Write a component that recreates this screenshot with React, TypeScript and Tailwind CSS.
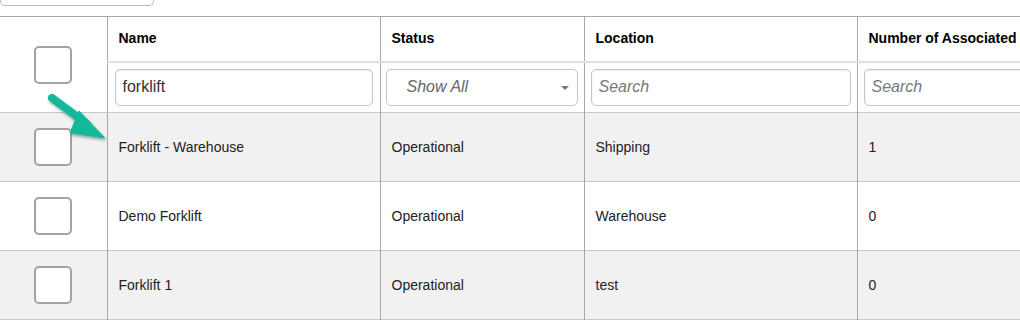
import React from "react";

const rows = [
  { name: "Forklift - Warehouse", status: "Operational", location: "Shipping", count: "1" },
  { name: "Demo Forklift", status: "Operational", location: "Warehouse", count: "0" },
  { name: "Forklift 1", status: "Operational", location: "test", count: "0" },
];

const Box = () => (
  <div className="mx-auto w-[38px] h-[38px] rounded-[5px] border-2 border-[#a3a3a3] bg-white" />
);

const inputCls =
  "w-full h-[37px] rounded-[5px] border border-[#c4c4c4] bg-white px-[7px] text-[16px] text-[#333] outline-none shadow-[inset_0_1px_2px_rgba(0,0,0,0.08)] placeholder:italic placeholder:text-[#777]";

export default function App() {
  return (
    <div className="relative w-[1020px] h-[325px] overflow-hidden bg-white font-['Liberation_Sans',Arial,sans-serif]">
      <div className="h-4">
        <div className="w-[154px] h-[6px] border border-t-0 border-[#bbb] rounded-b-[5px]" />
      </div>

      <table className="table-fixed border-collapse w-[1130px] text-[14px] text-[#222]">
        <colgroup>
          <col className="w-[107px]" />
          <col className="w-[273px]" />
          <col className="w-[204px]" />
          <col className="w-[273px]" />
          <col className="w-[273px]" />
        </colgroup>
        <thead>
          <tr className="h-[45px] border-t border-[#a8a8a8]">
            <th rowSpan={2} className="border-r border-b border-r-[#a8a8a8] border-b-[#c8c8c8] align-middle">
              <Box />
            </th>
            {["Name", "Status", "Location", "Number of Associated"].map((h) => (
              <th
                key={h}
                className="border-r border-b-2 border-r-[#a8a8a8] border-b-[#e0e0e0] pl-[11px] text-left font-bold text-black whitespace-nowrap"
              >
                {h}
              </th>
            ))}
          </tr>
          <tr className="h-[51px] border-b border-[#c8c8c8]">
            <td className="border-r border-[#a8a8a8] px-[7px]">
              <input className={inputCls} defaultValue="forklift" />
            </td>
            <td className="border-r border-[#a8a8a8] pl-[5px] pr-[6px]">
              <div className="relative flex items-center h-[37px] rounded-[5px] border border-[#c4c4c4] bg-white pl-[20px] text-[16px] italic text-[#666]">
                Show All
                <span className="absolute right-[8px] top-[16px] w-0 h-0 border-l-[4px] border-r-[4px] border-t-[4px] border-l-transparent border-r-transparent border-t-[#777]" />
              </div>
            </td>
            <td className="border-r border-[#a8a8a8] px-[6px]">
              <input className={inputCls} placeholder="Search" />
            </td>
            <td className="border-r border-[#a8a8a8] px-[6px]">
              <input className={inputCls} placeholder="Search" />
            </td>
          </tr>
        </thead>
        <tbody>
          {rows.map((r, i) => (
            <tr key={r.name} className={`h-[69px] border-b border-[#c8c8c8] ${i % 2 === 0 ? "bg-[#f1f1f1]" : "bg-white"}`}>
              <td className="border-r border-[#a8a8a8]">
                <Box />
              </td>
              <td className="border-r border-[#a8a8a8] pl-[11px]">{r.name}</td>
              <td className="border-r border-[#a8a8a8] pl-[11px]">{r.status}</td>
              <td className="border-r border-[#a8a8a8] pl-[11px]">{r.location}</td>
              <td className="border-r border-[#a8a8a8] pl-[11px]">{r.count}</td>
            </tr>
          ))}
        </tbody>
      </table>

      <svg className="absolute left-[44px] top-[90px]" width="70" height="56" viewBox="0 0 70 56">
        <defs>
          <filter id="sh" x="-20%" y="-20%" width="150%" height="150%">
            <feDropShadow dx="1" dy="2" stdDeviation="1.5" floodColor="#000" floodOpacity="0.35" />
          </filter>
        </defs>
        <g filter="url(#sh)" fill="#16b89a" stroke="#16b89a">
          <line x1="8" y1="8" x2="43" y2="34" strokeWidth="8" strokeLinecap="round" />
          <polygon points="35,21 61,48 26,43" strokeWidth="1" strokeLinejoin="round" />
        </g>
      </svg>
    </div>
  );
}
